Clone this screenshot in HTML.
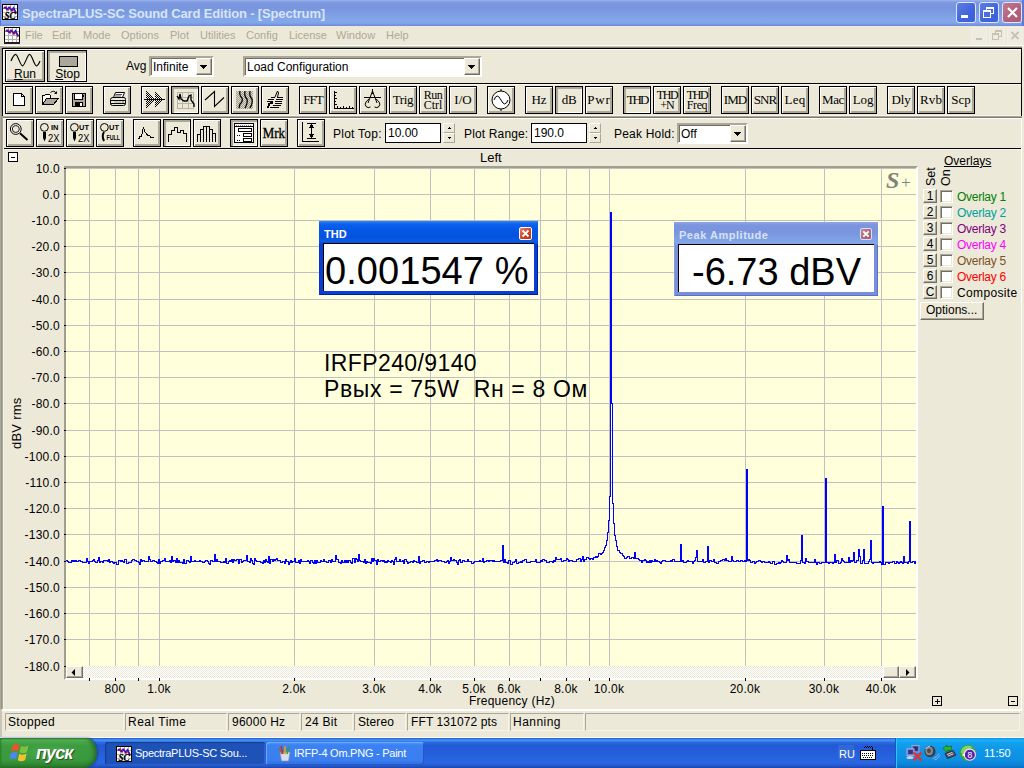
<!DOCTYPE html>
<html><head><meta charset="utf-8"><title>SpectraPLUS-SC Sound Card Edition - [Spectrum]</title>
<style>
html,body{margin:0;padding:0;}
body{width:1024px;height:768px;overflow:hidden;background:#ece9d8;position:relative;
 font-family:"Liberation Sans",sans-serif;font-size:12px;color:#000;}
.a{position:absolute;}
*{box-sizing:border-box;}
.t{position:absolute;white-space:nowrap;line-height:1;}
/* title */
#title{left:0;top:0;width:1024px;height:26px;
 background:linear-gradient(#a3b8ec 0px,#8ba4e6 1px,#7b97e0 3px,#7996df 9px,#7e9fe4 15px,#83a9e9 21px,#80a5e8 23px,#7592e1 25px,#6e8be0 26px);}
#title .tx{left:22px;top:7px;font:bold 13px "Liberation Sans",sans-serif;color:#d8e4f8;}
.tb{position:absolute;top:2px;width:20px;height:21px;border:1px solid #dfe6f8;border-radius:3px;}
/* menu */
.mi{position:absolute;top:29px;font:11px "Liberation Sans",sans-serif;color:#aca899;white-space:nowrap;line-height:13px;}
/* classic buttons */
.b{position:absolute;width:28px;height:28px;border:1px solid #000;background:#ece9d8;
 box-shadow:inset 1px 1px 0 #fff,inset -1px -1px 0 #aca899,inset -2px -2px 0 #aca899;
 font:13px "Liberation Serif",serif;text-align:center;line-height:25px;white-space:nowrap;overflow:hidden;}
.b.p{box-shadow:inset 1px 1px 0 #aca899,inset 2px 2px 0 #aca899,inset -1px -1px 0 #fff;background:#ece9d8;}
.b svg{position:absolute;left:0;top:0;}
.b2{line-height:10px;padding-top:3px;font-size:12px;}
/* xp style sunken field */
.edit{position:absolute;background:#fff;border:1px solid #000;font:12px "Liberation Sans",sans-serif;line-height:18px;padding-left:3px;}
.combo{position:absolute;background:#fff;border:2px solid;border-color:#aca899 #fff #fff #aca899;box-shadow:inset 1px 1px 0 #716f64;
 font:12px "Liberation Sans",sans-serif;line-height:19px;padding-left:2px;}
.dd{position:absolute;background:#ece9d8;border:1px solid;border-color:#fff #716f64 #716f64 #fff;box-shadow:inset -1px -1px 0 #aca899;}
.dd svg{position:absolute;left:3px;top:6px;}
.sp{position:absolute;width:12px;height:10px;background:#ece9d8;border:1px solid;border-color:#fff #aca899 #aca899 #fff;}
.lab{position:absolute;font:12px "Liberation Sans",sans-serif;line-height:15px;white-space:nowrap;}
.ax{position:absolute;font:12px "Liberation Sans",sans-serif;line-height:13px;white-space:nowrap;letter-spacing:0.25px;}
.sb{position:absolute;top:713px;height:18px;border:1px solid;border-color:#aca899 #f4f3ec #f4f3ec #aca899;font:12px "Liberation Sans",sans-serif;line-height:16px;padding-left:3px;white-space:nowrap;}
.ov{position:absolute;font:12px "Liberation Sans",sans-serif;line-height:14px;white-space:nowrap;}
.ob{position:absolute;left:923px;width:14px;height:14px;background:#ece9d8;border:1px solid;border-color:#fff #716f64 #716f64 #fff;box-shadow:inset -1px -1px 0 #aca899;font:12px "Liberation Sans",sans-serif;line-height:12px;text-align:center;}
.cb{position:absolute;left:940px;width:13px;height:13px;background:#fff;border:1px solid;border-color:#aca899 #fff #fff #aca899;box-shadow:inset 1px 1px 0 #716f64,inset -1px -1px 0 #ece9d8;}
.pm{position:absolute;width:10px;height:10px;border:1px solid #000;background:#fff;}
.pm i{position:absolute;background:#000;}
/* floating readouts */
.fw{position:absolute;}
.fw .ti{position:absolute;left:0;top:0;right:0;height:23px;}
.fw .tt{position:absolute;left:5px;top:6px;font:bold 11px "Liberation Sans",sans-serif;line-height:12px;white-space:nowrap;}
.fw .val{position:absolute;left:4px;top:22px;right:4px;bottom:4px;background:#fff;border-top:1px solid #000;border-left:1px solid #000;
 font:38px "Liberation Sans",sans-serif;line-height:54px;white-space:nowrap;}
.fw .x{position:absolute;width:13px;height:13px;border:1px solid #fff;border-radius:2px;}
/* taskbar */
#task{left:0;top:738px;width:1024px;height:30px;
 background:linear-gradient(#1f4fc0 0,#3a80ea 1px,#4091ec 2.5px,#2b6be0 4.5px,#2459d6 7px,#245bd8 12px,#2763de 20px,#2966e2 25px,#2357cc 28px,#1b44ae 30px);}
.tk{position:absolute;top:742px;height:23px;border-radius:3px;font:11px "Liberation Sans",sans-serif;color:#fff;line-height:22px;white-space:nowrap;}
</style></head>
<body>
<div id="title" class="a"><svg class="a" style="left:2px;top:4px" width="16" height="16" viewBox="0 0 16 16" shape-rendering="crispEdges"><rect x="0" y="0" width="16" height="16" fill="#fff"/><rect x="0.5" y="0.5" width="15" height="15" fill="none" stroke="#000"/><rect x="4" y="1" width="1" height="14" fill="#b0b0b0"/><rect x="1" y="4" width="14" height="1" fill="#b0b0b0"/><rect x="8" y="1" width="1" height="14" fill="#b0b0b0"/><rect x="1" y="8" width="14" height="1" fill="#b0b0b0"/><rect x="12" y="1" width="1" height="14" fill="#b0b0b0"/><rect x="1" y="12" width="14" height="1" fill="#b0b0b0"/><path d="M1.5,4.5 L4,3 L6,6 L8,3.5 L10,7 L12,5 L14,10" fill="none" stroke="#e00020" stroke-width="1.4" shape-rendering="auto"/><path d="M2,3 L5,5.5 L7,3 L9.5,6.5 L11.5,3.5 L14.5,9" fill="none" stroke="#1020e0" stroke-width="1.2" shape-rendering="auto"/><rect x="3" y="8" width="10" height="7" fill="#fff" opacity=".6"/><text x="2.500" y="14.600" font-family="Liberation Serif,serif" font-style="italic" font-weight="bold" font-size="9.500" fill="#000" stroke="#000" stroke-width="0.300" shape-rendering="auto" textLength="11" lengthAdjust="spacingAndGlyphs">SC</text></svg><span class="t tx" style="font:bold 13px 'Liberation Sans',sans-serif;letter-spacing:-0.149px;line-height:1">SpectraPLUS-SC Sound Card Edition - [Spectrum]</span><div class="tb" style="left:956px;background:linear-gradient(135deg,#5d7fe6,#3f63dc 60%,#3d62dd)"><i class="a" style="left:4px;top:12px;width:7px;height:3px;background:#fff"></i></div><div class="tb" style="left:979px;background:linear-gradient(135deg,#5d7fe6,#3f63dc 60%,#3d62dd)"><i class="a" style="left:6px;top:4px;width:8px;height:7px;border:1px solid #fff;border-top-width:2px"></i><i class="a" style="left:3px;top:7px;width:8px;height:8px;border:1px solid #fff;border-top-width:2px;background:#4a6ee0"></i></div><div class="tb" style="left:1002px;background:linear-gradient(135deg,#c07a92,#b2607a 60%,#ae5b75)"><svg class="a" style="left:0;top:0" width="19" height="19"><path d="M5,5 L14,14 M14,5 L5,14" stroke="#fff" stroke-width="2.2"/></svg></div><i class="a" style="left:1022px;top:0;width:2px;height:26px;background:#5f78d4"></i><i class="a" style="left:0;top:0;width:1px;height:26px;background:#5f78d4"></i></div>
<svg class="a" style="left:4px;top:27px" width="16" height="16" viewBox="0 0 16 16" shape-rendering="crispEdges"><rect x="0" y="0" width="16" height="16" fill="#fff"/><rect x="0.5" y="0.5" width="15" height="15" fill="none" stroke="#000"/><rect x="4" y="1" width="1" height="14" fill="#b0b0b0"/><rect x="1" y="4" width="14" height="1" fill="#b0b0b0"/><rect x="8" y="1" width="1" height="14" fill="#b0b0b0"/><rect x="1" y="8" width="14" height="1" fill="#b0b0b0"/><rect x="12" y="1" width="1" height="14" fill="#b0b0b0"/><rect x="1" y="12" width="14" height="1" fill="#b0b0b0"/><path d="M1.5,4.5 L4,3 L6,6 L8,3.5 L10,7 L12,5 L14,10" fill="none" stroke="#e00020" stroke-width="1.4" shape-rendering="auto"/><path d="M2,3 L5,5.5 L7,3 L9.5,6.5 L11.5,3.5 L14.5,9" fill="none" stroke="#1020e0" stroke-width="1.2" shape-rendering="auto"/></svg><i class="a" style="left:4px;top:42px;width:16px;height:2px;background:#222"></i><span class="mi" style="left:25px">File</span><span class="mi" style="left:52px">Edit</span><span class="mi" style="left:83px">Mode</span><span class="mi" style="left:121px">Options</span><span class="mi" style="left:170px">Plot</span><span class="mi" style="left:200px">Utilities</span><span class="mi" style="left:246px">Config</span><span class="mi" style="left:289px">License</span><span class="mi" style="left:336px">Window</span><span class="mi" style="left:386px">Help</span><div class="a" style="left:971px;top:27px;width:16px;height:17px;background:#eeece0;border:1px solid #f2f0e6"><i class="a" style="left:4px;top:10px;width:6px;height:2px;background:#c5c2b2"></i></div><div class="a" style="left:989px;top:27px;width:16px;height:17px;background:#eeece0;border:1px solid #f2f0e6"><i class="a" style="left:5px;top:2px;width:7px;height:7px;border:1px solid #c5c2b2;border-top-width:2px"></i><i class="a" style="left:2px;top:5px;width:7px;height:7px;border:1px solid #c5c2b2;border-top-width:2px;background:#eeece0"></i></div><div class="a" style="left:1007px;top:27px;width:16px;height:17px;background:#eeece0;border:1px solid #f2f0e6"><svg class="a" style="left:0;top:0" width="14" height="15"><path d="M3.5,4 L10.5,11 M10.5,4 L3.5,11" stroke="#c5c2b2" stroke-width="1.8"/></svg></div>
<i class="a" style="left:0px;top:45px;width:1024px;height:1px;background:#fff"></i><i class="a" style="left:0px;top:46px;width:1024px;height:1px;background:#c8c5b2"></i><i class="a" style="left:0px;top:47px;width:1024px;height:1px;background:#85837a"></i><i class="a" style="left:0px;top:46px;width:3px;height:663px;background:#aca899"></i><i class="a" style="left:1px;top:48px;width:1px;height:661px;background:#98968a"></i><i class="a" style="left:0px;top:709px;width:2px;height:28px;background:#c8c5b4"></i><i class="a" style="left:2px;top:48px;width:1020px;height:1px;background:#000"></i><i class="a" style="left:2px;top:48px;width:1px;height:68px;background:#000"></i><i class="a" style="left:1021px;top:48px;width:1px;height:68px;background:#000"></i><i class="a" style="left:2px;top:83px;width:1020px;height:1px;background:#000"></i><i class="a" style="left:3px;top:49px;width:1018px;height:1px;background:#fbf9f0"></i><i class="a" style="left:3px;top:49px;width:1px;height:34px;background:#fbf9f0"></i><i class="a" style="left:3px;top:84px;width:1018px;height:1px;background:#fbf9f0"></i><i class="a" style="left:3px;top:84px;width:1px;height:32px;background:#fbf9f0"></i><i class="a" style="left:3px;top:115px;width:1018px;height:1px;background:#f6f3e6"></i><i class="a" style="left:3px;top:116px;width:1019px;height:1px;background:#aca899"></i><i class="a" style="left:3px;top:117px;width:1019px;height:1px;background:#7d7b70"></i><i class="a" style="left:3px;top:118px;width:1px;height:591px;background:#f6f3e6"></i><i class="a" style="left:4px;top:118px;width:1017px;height:1px;background:#fff"></i><i class="a" style="left:4px;top:148px;width:1017px;height:1px;background:#000"></i><i class="a" style="left:4px;top:149px;width:1017px;height:1px;background:#f8f6ee"></i><i class="a" style="left:1021px;top:118px;width:1px;height:593px;background:#fff"></i><i class="a" style="left:1022px;top:46px;width:2px;height:692px;background:#ece9d8"></i><i class="a" style="left:0px;top:737px;width:1024px;height:1px;background:#fff"></i>
<div class="b" style="left:5px;top:50px;width:40px;height:32px;font:12px 'Liberation Sans',sans-serif;line-height:12px;padding-top:17px"><svg width="38" height="30" viewBox="0 0 38 30"><path d="M5,10 C6.500,6.500 8.300,3.400 9.600,3.400 C11.800,3.400 14.300,14.800 16.500,14.800 C18.800,14.800 21.300,3.400 23.600,3.400 C25.900,3.400 28.300,14.800 30.500,14.800 C31.800,14.800 33,12.500 34,10" fill="none" stroke="#000" stroke-width="1.15"/></svg><span style="position:relative"><u>R</u>un</span></div>
<div class="b p" style="left:47px;top:50px;width:40px;height:32px;font:12px 'Liberation Sans',sans-serif;line-height:12px;padding-top:17px;padding-left:1px"><i class="a" style="left:11px;top:5px;width:19px;height:11px;border:1px solid #000;background:#aca899"></i><span style="position:relative"><u>S</u>top</span></div>
<span class="lab" style="left:126px;top:59px">Avg</span>
<div class="combo" style="left:149px;top:56px;width:65px;height:21px">Infinite<i class="dd" style="right:0;top:0;width:16px;height:17px"><svg width="7" height="4" shape-rendering="crispEdges"><path d="M0,0h7v1h-1v1h-1v1h-1v1h-1v-1h-1v-1h-1v-1h-1z" fill="#000"/></svg></i></div>
<div class="combo" style="left:243px;top:56px;width:239px;height:21px">Load Configuration<i class="dd" style="right:0;top:0;width:16px;height:17px"><svg width="7" height="4" shape-rendering="crispEdges"><path d="M0,0h7v1h-1v1h-1v1h-1v1h-1v-1h-1v-1h-1v-1h-1z" fill="#000"/></svg></i></div>
<div class="b" style="left:5px;top:86px"><svg width="26" height="26" viewBox="0 0 26 26" shape-rendering="crispEdges" fill="none" stroke="#000" stroke-width="1"><path d="M7.5,6.5 H15.5 L18.5,9.5 V18.5 H7.5z" fill="#fff"/><path d="M15.5,6.5 V9.5 H18.5"/></svg></div>
<div class="b" style="left:35px;top:86px"><svg width="26" height="26" viewBox="0 0 26 26" shape-rendering="crispEdges" fill="none" stroke="#000" stroke-width="1"><path d="M6.5,17.5 V8.5 H8.5 L9.5,7.5 H13.5 L14.5,8.5 V10.5" fill="#fff"/><path d="M6.5,17.5 L10.5,11.5 H22.5 L17.5,17.5z" fill="#aca899"/><path d="M14.5,5.5 Q18,2.5 20.5,6.5 M20.5,6.5 L18.5,6.5 M20.5,6.5 L20.5,4.5" shape-rendering="auto"/></svg></div>
<div class="b" style="left:65px;top:86px"><svg width="26" height="26" viewBox="0 0 26 26" shape-rendering="crispEdges" fill="none" stroke="#000" stroke-width="1"><rect x="6.5" y="6.5" width="13" height="13" fill="#aca899"/><rect x="8.5" y="6.5" width="8" height="6" fill="#fff"/><rect x="9" y="15" width="8" height="5" fill="#000" stroke="none"/><rect x="14" y="16" width="2" height="3" fill="#fff" stroke="none"/><rect x="17" y="8" width="1" height="2" fill="#000" stroke="none"/></svg></div>
<div class="b" style="left:103px;top:86px"><svg width="26" height="26" viewBox="0 0 26 26" fill="none" stroke="#000" stroke-width="1"><path d="M9.5,10.5 L11.5,5.5 H20.5 L18.5,10.5z" fill="#fff"/><path d="M11.5,7.5 H18 M11,9 H17" stroke="#555"/><path d="M6.500,12.5 Q6.5,10.5 9,10.5 H20 Q21.5,10.500 21.500,12.500 V16.500 Q21.500,18.500 19.500,18.500 H8.500 Q6.500,18.500 6.500,16.500z" fill="#ece9d8"/><path d="M6.500,13.500 H21.500 M6.500,16.500 H21.500"/><path d="M10,15 H17" stroke="#aca899"/><path d="M18,15 H20" stroke="#666"/></svg></div>
<div class="b" style="left:141px;top:86px"><svg width="26" height="26" viewBox="0 0 26 26" shape-rendering="crispEdges"><path d="M4,4h1v1h-1zM4,6h1v1h-1zM4,8h1v1h-1zM4,10h1v1h-1zM4,12h1v1h-1zM4,14h1v1h-1zM4,16h1v1h-1zM4,18h1v1h-1zM4,20h1v1h-1zM5,5h1v1h-1zM5,7h1v1h-1zM5,9h1v1h-1zM5,11h1v1h-1zM5,13h1v1h-1zM5,15h1v1h-1zM5,17h1v1h-1zM5,19h1v1h-1zM6,6h1v1h-1zM6,8h1v1h-1zM6,10h1v1h-1zM6,12h1v1h-1zM6,14h1v1h-1zM6,16h1v1h-1zM6,18h1v1h-1zM7,7h1v1h-1zM7,9h1v1h-1zM7,11h1v1h-1zM7,13h1v1h-1zM7,15h1v1h-1zM7,17h1v1h-1zM8,8h1v1h-1zM8,10h1v1h-1zM8,12h1v1h-1zM8,14h1v1h-1zM8,16h1v1h-1zM9,9h1v1h-1zM9,11h1v1h-1zM9,13h1v1h-1zM9,15h1v1h-1zM10,10h1v1h-1zM10,12h1v1h-1zM10,14h1v1h-1zM11,11h1v1h-1zM11,13h1v1h-1zM12,12h1v1h-1zM13,5h1v1h-1zM13,7h1v1h-1zM13,9h1v1h-1zM13,11h1v1h-1zM13,13h1v1h-1zM13,15h1v1h-1zM13,17h1v1h-1zM13,19h1v1h-1zM14,6h1v1h-1zM14,8h1v1h-1zM14,10h1v1h-1zM14,12h1v1h-1zM14,14h1v1h-1zM14,16h1v1h-1zM14,18h1v1h-1zM15,7h1v1h-1zM15,9h1v1h-1zM15,11h1v1h-1zM15,13h1v1h-1zM15,15h1v1h-1zM15,17h1v1h-1zM16,8h1v1h-1zM16,10h1v1h-1zM16,12h1v1h-1zM16,14h1v1h-1zM16,16h1v1h-1zM17,9h1v1h-1zM17,11h1v1h-1zM17,13h1v1h-1zM17,15h1v1h-1zM18,10h1v1h-1zM18,12h1v1h-1zM18,14h1v1h-1zM19,11h1v1h-1zM19,13h1v1h-1zM20,12h1v1h-1z" fill="#000"/><path d="M2,12.500 H23" stroke="#000"/></svg></div>
<div class="b p" style="left:171px;top:86px"><svg width="26" height="26" viewBox="0 0 26 26" shape-rendering="crispEdges" fill="none" stroke="#000" stroke-width="1"><path d="M5.5,5.5 H21.5 V21.500 H5.5z M5.5,10.5 H21.5 M5.5,16.5 H21.5 M10.5,5.5 V21.5 M16.5,5.5 V21.5" stroke="#b8b4a0" stroke-width="1"/><path d="M5,9 L7,12 L8,7 L9,12 L12,14 L15,14 L17,9 L19,8 L19,13 L22,17 L22,20" stroke-width="1.35" shape-rendering="auto"/></svg></div>
<div class="b" style="left:201px;top:86px"><svg width="26" height="26" viewBox="0 0 26 26" shape-rendering="crispEdges" fill="none" stroke="#000" stroke-width="1"><path d="M3,13 L12.500,4.500 V19.500 L22,10.500" shape-rendering="auto" stroke-width="1.1"/></svg></div>
<div class="b" style="left:231px;top:86px"><svg width="26" height="26" viewBox="0 0 26 26"><defs><pattern id="hw" width="2" height="2" patternUnits="userSpaceOnUse"><rect width="2" height="2" fill="#dcd8ca"/><rect x="0" y="0" width="1" height="1" fill="#a09c8e"/><rect x="1" y="1" width="1" height="1" fill="#a09c8e"/></pattern></defs><rect x="4" y="4" width="17" height="18" fill="url(#hw)"/><path d="M8,4 Q7,8 10,11 Q11,15 8,17 L7,21 M13,4 Q12,9 15,12 Q16,16 13,21 M18,4 Q17,9 20,12 Q21,16 18,21" fill="none" stroke="#000" stroke-width="1.25"/></svg></div>
<div class="b" style="left:261px;top:86px"><svg width="26" height="26" viewBox="0 0 26 26" shape-rendering="crispEdges" fill="none" stroke="#000" stroke-width="1"><path d="M9,10.500 H13 M15,10.500 H21 M6,12.500 H12 M14,12.500 H21 M5,14.500 H11 M13,14.500 H20 M6,16.500 H9 M13,16.500 H20 M6,18.500 H8 M11,18.500 H19 M8,20.500 H17" stroke-width="1"/><path d="M13,10 L15.500,4 L16.500,6 L15.500,10" shape-rendering="auto"/><path d="M9,14 L11,14 L11,17 L8,17 L7,21 L5,21 L6,17z" fill="#000" stroke="none"/></svg></div>
<div class="b" style="left:299px;top:86px"><span style="font:13px 'Liberation Serif',serif;letter-spacing:-0.969px;line-height:inherit">FFT</span></div>
<div class="b" style="left:329px;top:86px"><svg width="26" height="26" viewBox="0 0 26 26" shape-rendering="crispEdges" fill="none" stroke="#000" stroke-width="1"><path d="M4.500,4 V21.500 H24 M4.500,5.500 H7 M4.500,8.500 H6 M4.500,11.500 H7 M4.500,14.500 H6 M4.500,17.500 H7 M7.500,21.500 V19 M10.500,21.500 V20 M13.500,21.500 V19 M16.500,21.500 V20 M19.500,21.500 V19 M22.500,21.500 V20"/></svg></div>
<div class="b" style="left:359px;top:86px"><svg width="26" height="26" viewBox="0 0 26 26" fill="none" stroke="#000" stroke-width="1"><path d="M12.500,2 V7 M12.500,4 L8,16 M12.500,4 L17,16 M4,10.500 H21"/><path d="M9,12 Q3.500,16 6,19.500 Q8,21.500 10.500,20 M16,12 Q21.500,16 19,19.500 Q17,21.500 14.500,20"/></svg></div>
<div class="b" style="left:389px;top:86px"><span style="font:13px 'Liberation Serif',serif;letter-spacing:-0.359px;line-height:inherit">Trig</span></div>
<div class="b b2" style="left:419px;top:86px"><span style="font:12px 'Liberation Serif',serif;letter-spacing:-0.505px;line-height:inherit">Run</span><br><span style="font:12px 'Liberation Serif',serif;letter-spacing:-0.043px;line-height:inherit">Ctrl</span></div>
<div class="b" style="left:449px;top:86px"><span style="font:13px 'Liberation Serif',serif;letter-spacing:0.052px;line-height:inherit">I/O</span></div>
<div class="b" style="left:487px;top:86px"><svg width="26" height="26" viewBox="0 0 26 26" fill="none" stroke="#000" stroke-width="1"><circle cx="13" cy="13" r="9" fill="#fff"/><path d="M13,2 V4 M13,22 V24"/><path d="M6,13 Q9,5 13,13 Q17,21 20,13"/></svg></div>
<div class="b" style="left:525px;top:86px"><span style="font:13px 'Liberation Serif',serif;letter-spacing:-0.086px;line-height:inherit">Hz</span></div>
<div class="b p" style="left:555px;top:86px"><span style="font:13px 'Liberation Serif',serif;letter-spacing:-0.336px;line-height:inherit">dB</span></div>
<div class="b" style="left:585px;top:86px"><span style="font:13px 'Liberation Serif',serif;letter-spacing:0.849px;line-height:inherit">Pwr</span></div>
<div class="b p" style="left:623px;top:86px"><span style="font:13px 'Liberation Serif',serif;letter-spacing:-2.073px;line-height:inherit">THD</span></div>
<div class="b b2" style="left:653px;top:86px"><span style="font:12px 'Liberation Serif',serif;letter-spacing:-1.391px;line-height:inherit">THD</span><br><span style="font:12px 'Liberation Serif',serif;letter-spacing:-0.969px;line-height:inherit">+N</span></div>
<div class="b b2" style="left:683px;top:86px"><span style="font:12px 'Liberation Serif',serif;letter-spacing:-1.391px;line-height:inherit">THD</span><br><span style="font:12px 'Liberation Serif',serif;letter-spacing:-0.375px;line-height:inherit">Freq</span></div>
<div class="b" style="left:721px;top:86px"><span style="font:13px 'Liberation Serif',serif;letter-spacing:-0.927px;line-height:inherit">IMD</span></div>
<div class="b" style="left:751px;top:86px"><span style="font:13px 'Liberation Serif',serif;letter-spacing:-0.932px;line-height:inherit">SNR</span></div>
<div class="b" style="left:781px;top:86px"><span style="font:13px 'Liberation Serif',serif;letter-spacing:0.260px;line-height:inherit">Leq</span></div>
<div class="b" style="left:819px;top:86px"><span style="font:13px 'Liberation Serif',serif;letter-spacing:-0.370px;line-height:inherit">Mac</span></div>
<div class="b" style="left:849px;top:86px"><span style="font:13px 'Liberation Serif',serif;letter-spacing:-0.151px;line-height:inherit">Log</span></div>
<div class="b" style="left:887px;top:86px"><span style="font:13px 'Liberation Serif',serif;letter-spacing:-0.167px;line-height:inherit">Dly</span></div>
<div class="b" style="left:917px;top:86px"><span style="font:13px 'Liberation Serif',serif;letter-spacing:0.109px;line-height:inherit">Rvb</span></div>
<div class="b" style="left:947px;top:86px"><span style="font:13px 'Liberation Serif',serif;letter-spacing:0.000px;line-height:inherit">Scp</span></div>
<div class="b" style="left:6px;top:119px"><svg width="26" height="26" viewBox="0 0 26 26" fill="none" stroke="#000" stroke-width="1"><circle cx="8.800" cy="9" r="5.400" fill="#fff"/><circle cx="8.800" cy="9" r="3.500" fill="#ece9d8" stroke-width="0.9"/><path d="M13,13.200 L20.500,20" stroke-width="2"/></svg></div>
<div class="b" style="left:36px;top:119px"><svg width="26" height="26" viewBox="0 0 26 26"><circle cx="7.400" cy="7.400" r="3.900" fill="#ece9d8" stroke="#000"/><path d="M6,12 H9 V18 L7.500,21.500 L6,18z" fill="#000"/><text x="14" y="10" font-family="Liberation Sans,sans-serif" font-size="6.500" font-weight="bold" fill="#000" textLength="7.5" lengthAdjust="spacingAndGlyphs">IN</text><text x="11" y="21.500" font-family="Liberation Sans,sans-serif" font-size="11.500" fill="#000" textLength="11.500" lengthAdjust="spacingAndGlyphs">2X</text></svg></div>
<div class="b" style="left:66px;top:119px"><svg width="26" height="26" viewBox="0 0 26 26"><circle cx="7.400" cy="7.400" r="3.900" fill="#ece9d8" stroke="#000"/><path d="M6,12 H9 V18 L7.500,21.500 L6,18z" fill="#000"/><text x="12" y="10" font-family="Liberation Sans,sans-serif" font-size="6.500" font-weight="bold" fill="#000" textLength="10" lengthAdjust="spacingAndGlyphs">UT</text><text x="11" y="21.500" font-family="Liberation Sans,sans-serif" font-size="11.500" fill="#000" textLength="11.500" lengthAdjust="spacingAndGlyphs">2X</text></svg></div>
<div class="b" style="left:96px;top:119px"><svg width="26" height="26" viewBox="0 0 26 26"><circle cx="7.400" cy="7.400" r="3.900" fill="#ece9d8" stroke="#000"/><path d="M7,12 Q4.500,16 7,21" stroke="#000" stroke-width="2" fill="none"/><text x="12" y="10" font-family="Liberation Sans,sans-serif" font-size="6.500" font-weight="bold" fill="#000" textLength="10" lengthAdjust="spacingAndGlyphs">UT</text><text x="9.500" y="19.500" font-family="Liberation Sans,sans-serif" font-size="6.500" font-weight="bold" fill="#000" textLength="13.500" lengthAdjust="spacingAndGlyphs">FULL</text></svg></div>
<div class="b" style="left:133px;top:119px"><svg width="26" height="26" viewBox="0 0 26 26" shape-rendering="crispEdges" fill="none" stroke="#000" stroke-width="1"><path d="M3.500,18.500 H5.500 V16.500 H7.500 L9.500,7 L10.500,11.500 L12.500,13.500 L13.500,15.500 H15.500 L17,17.500 H19 L20.500,18.500" stroke-width="1"/></svg></div>
<div class="b p" style="left:163px;top:119px"><svg width="26" height="26" viewBox="0 0 26 26" shape-rendering="crispEdges" fill="none" stroke="#000" stroke-width="1"><path d="M4.500,22 V14.500 H7.500 V10.500 H10.500 V7.500 H13.500 V12.500 H16.500 V10.500 H19.500 V13.500 H22.500 V22" stroke-width="1"/></svg></div>
<div class="b" style="left:193px;top:119px"><svg width="26" height="26" viewBox="0 0 26 26" shape-rendering="crispEdges" fill="none" stroke="#000" stroke-width="1"><path d="M3.500,22 V14.500 H6.500 V22 M6.500,14.500 V9.500 H9.500 V22 M9.500,9.500 V6.500 H12.500 V22 M12.500,6.500 H15.500 V22 M15.500,9.500 H18.500 V22 M18.500,13.500 H21.500 V22"/></svg></div>
<div class="b p" style="left:230px;top:119px"><svg width="26" height="26" viewBox="0 0 26 26" shape-rendering="crispEdges" fill="none" stroke="#000" stroke-width="1"><rect x="3.500" y="3.500" width="19" height="19" fill="#fff"/><path d="M3.500,6.500 H22.500"/><path d="M5,5 H21" stroke="#888" stroke-dasharray="1 1"/><rect x="7.500" y="8.500" width="13" height="3" fill="#fff"/><rect x="12.500" y="13.500" width="8" height="3" fill="#fff"/><rect x="12.500" y="18.500" width="8" height="3" fill="#fff"/><path d="M6,15 H10 M6,20 H10" stroke-dasharray="1 1"/></svg></div>
<div class="b" style="left:260px;top:119px"><span style="display:inline-block;transform:scaleX(.86);font:15px 'Liberation Serif',serif;line-height:26px;-webkit-text-stroke:0.35px #000">Mrk</span></div>
<div class="b" style="left:297px;top:119px"><svg width="26" height="26" viewBox="0 0 26 26" shape-rendering="crispEdges" fill="none" stroke="#000" stroke-width="1"><path d="M4.500,2 V21.500 H21"/><path d="M9,3.500 H18 M9,18.500 H18 M13.500,4 V18"/><path d="M13.500,4 L10.500,8 H16.500z M13.500,18 L10.500,14 H16.500z" fill="#000" stroke="none"/></svg></div>
<span class="lab" style="left:333px;top:127px;letter-spacing:0.25px">Plot Top:</span>
<div class="edit" style="left:385px;top:123px;width:56px;height:20px;padding-left:2px">10.00</div>
<i class="sp" style="left:443px;top:123px"><svg class="a" style="left:3px;top:3px" width="5" height="3" shape-rendering="crispEdges"><path d="M2,0h1v1h1v1h-3v-1h1z" fill="#000"/></svg></i>
<i class="sp" style="left:443px;top:133px"><svg class="a" style="left:3px;top:3px" width="5" height="3" shape-rendering="crispEdges"><path d="M1,0h3v1h-1v1h-1v-1h-1z" fill="#000"/></svg></i>
<span class="lab" style="left:464px;top:127px;letter-spacing:0.15px">Plot Range:</span>
<div class="edit" style="left:531px;top:123px;width:56px;height:20px;padding-left:2px">190.0</div>
<i class="sp" style="left:589px;top:123px"><svg class="a" style="left:3px;top:3px" width="5" height="3" shape-rendering="crispEdges"><path d="M2,0h1v1h1v1h-3v-1h1z" fill="#000"/></svg></i>
<i class="sp" style="left:589px;top:133px"><svg class="a" style="left:3px;top:3px" width="5" height="3" shape-rendering="crispEdges"><path d="M1,0h3v1h-1v1h-1v-1h-1z" fill="#000"/></svg></i>
<span class="lab" style="left:614px;top:127px;letter-spacing:0.2px">Peak Hold:</span>
<div class="combo" style="left:677px;top:123px;width:71px;height:21px">Off<i class="dd" style="right:0;top:0;width:16px;height:17px"><svg width="7" height="4" shape-rendering="crispEdges"><path d="M0,0h7v1h-1v1h-1v1h-1v1h-1v-1h-1v-1h-1v-1h-1z" fill="#000"/></svg></i></div>

<div class="pm" style="left:8px;top:152px"><i style="left:2px;top:4px;width:4px;height:1px"></i></div>
<span class="lab" style="left:480px;top:150px;font-size:13px">Left</span>
<div class="a" style="left:64px;top:166px;width:854px;height:514px;border:2px solid;border-color:#a0a090 #fff #fff #a0a090;background:#ffffdc"></div>
<svg class="a" style="left:66px;top:168px" width="850" height="510" viewBox="66 168 850 510" shape-rendering="crispEdges"><path d="M89.5,168V666M115.5,168V666M138.5,168V666M159.5,168V666M294.5,168V666M374.5,168V666M430.5,168V666M474.5,168V666M509.5,168V666M540.5,168V666M566.5,168V666M589.5,168V666M609.5,168V666M745.5,168V666M824.5,168V666M881.5,168V666M66,168.5H916M66,194.5H916M66,220.5H916M66,246.5H916M66,272.5H916M66,299.5H916M66,325.5H916M66,351.5H916M66,377.5H916M66,403.5H916M66,430.5H916M66,456.5H916M66,482.5H916M66,508.5H916M66,534.5H916M66,561.5H916M66,587.5H916M66,613.5H916M66,639.5H916" stroke="#c0c0c0" stroke-width="1" fill="none"/><path d="M66.5,560.5H67.5V561.5H68.5V562.5H69.5H70.5H71.5V560.5H72.5V561.5H73.5V560.5H74.5V561.5H75.5V560.5H76.5V561.5H77.5H78.5V560.5H79.5H80.5V561.5H81.5H82.5V562.5H83.5H84.5H85.5H86.5V558.5H87.5V561.5H88.5V563.5H89.5V561.5H90.5H91.5H92.5V560.5H93.5V559.5H94.5V561.5H95.5V562.5H96.5H97.5V560.5H98.5V557.5H99.5V562.5H100.5V561.5H101.5H102.5V562.5H103.5V560.5H104.5H105.5H106.5H107.5V561.5H108.5V559.5H109.5V562.5H110.5V561.5H111.5H112.5V562.5H113.5V563.5H114.5V562.5H115.5H116.5V564.5H117.5H118.5V560.5H119.5H120.5V561.5H121.5V560.5H122.5V561.5H123.5V562.5H124.5V559.5H125.5H126.5V563.5H127.5H128.5V562.5H129.5H130.5H131.5V560.5H132.5V559.5H133.5H134.5V560.5H135.5H136.5V561.5H137.5H138.5V562.5H139.5V564.5H140.5V559.5H141.5V561.5H142.5V560.5H143.5H144.5V561.5H145.5H146.5H147.5H148.5V556.5H149.5V559.5H150.5V561.5H151.5H152.5V560.5H153.5H154.5V561.5H155.5H156.5V562.5H157.5V563.5H158.5V559.5H159.5V563.5H160.5V561.5H161.5H162.5V560.5H163.5H164.5V558.5H165.5V561.5H166.5H167.5H168.5H169.5V560.5H170.5V562.5H171.5V556.5H172.5V561.5H173.5V560.5H174.5H175.5V562.5H176.5V558.5H177.5V562.5H178.5V560.5H179.5V562.5H180.5H181.5H182.5V563.5H183.5V559.5H184.5V563.5H185.5H186.5V560.5H187.5H188.5V561.5H189.5V562.5H190.5V556.5H191.5V561.5H192.5H193.5H194.5V560.5H195.5V561.5H196.5H197.5H198.5H199.5V560.5H200.5V561.5H201.5H202.5V562.5H203.5H204.5V561.5H205.5V560.5H206.5H207.5V561.5H208.5V563.5H209.5V564.5H210.5V560.5H211.5H212.5V561.5H213.5H214.5V554.5H215.5V561.5H216.5V559.5H217.5V561.5H218.5H219.5H220.5V562.5H221.5H222.5H223.5V561.5H224.5V562.5H225.5V558.5H226.5V563.5H227.5H228.5V561.5H229.5V560.5H230.5V561.5H231.5V559.5H232.5V562.5H233.5V559.5H234.5V560.5H235.5H236.5V559.5H237.5H238.5V563.5H239.5V559.5H240.5H241.5V562.5H242.5V561.5H243.5V560.5H244.5H245.5H246.5V555.5H247.5V561.5H248.5H249.5V562.5H250.5V558.5H251.5V560.5H252.5V563.5H253.5V564.5H254.5V558.5H255.5V560.5H256.5V561.5H257.5H258.5H259.5H260.5V562.5H261.5H262.5V563.5H263.5V560.5H264.5V562.5H265.5V559.5H266.5V561.5H267.5V562.5H268.5V556.5H269.5V563.5H270.5V559.5H271.5H272.5V561.5H273.5V559.5H274.5V560.5H275.5V559.5H276.5V558.5H277.5V560.5H278.5H279.5H280.5V562.5H281.5H282.5V561.5H283.5H284.5V563.5H285.5V559.5H286.5V561.5H287.5H288.5V564.5H289.5V562.5H290.5V560.5H291.5V562.5H292.5V561.5H293.5H294.5V558.5H295.5V562.5H296.5H297.5H298.5V560.5H299.5V563.5H300.5V559.5H301.5V561.5H302.5H303.5H304.5H305.5H306.5H307.5V560.5H308.5V561.5H309.5V563.5H310.5V560.5H311.5H312.5V562.5H313.5V563.5H314.5V560.5H315.5V563.5H316.5V560.5H317.5V562.5H318.5H319.5H320.5V560.5H321.5V561.5H322.5H323.5V559.5H324.5V561.5H325.5H326.5V562.5H327.5H328.5V560.5H329.5H330.5V562.5H331.5V559.5H332.5V561.5H333.5H334.5H335.5V555.5H336.5V559.5H337.5H338.5V562.5H339.5H340.5V563.5H341.5V560.5H342.5V562.5H343.5H344.5V560.5H345.5V562.5H346.5V560.5H347.5V562.5H348.5V560.5H349.5H350.5V562.5H351.5V563.5H352.5V558.5H353.5H354.5V562.5H355.5V558.5H356.5V559.5H357.5V561.5H358.5V554.5H359.5V560.5H360.5V561.5H361.5H362.5H363.5V562.5H364.5V559.5H365.5V563.5H366.5V561.5H367.5V562.5H368.5H369.5H370.5V563.5H371.5V558.5H372.5V561.5H373.5V558.5H374.5V560.5H375.5H376.5V564.5H377.5V559.5H378.5V561.5H379.5H380.5V560.5H381.5H382.5V561.5H383.5V560.5H384.5V562.5H385.5V561.5H386.5V562.5H387.5V560.5H388.5V561.5H389.5H390.5V562.5H391.5V560.5H392.5V561.5H393.5V564.5H394.5V559.5H395.5V557.5H396.5V561.5H397.5H398.5H399.5V559.5H400.5V561.5H401.5H402.5V560.5H403.5V563.5H404.5V559.5H405.5H406.5V561.5H407.5V563.5H408.5V562.5H409.5H410.5V561.5H411.5H412.5V562.5H413.5V560.5H414.5V561.5H415.5H416.5V562.5H417.5H418.5V556.5H419.5V563.5H420.5V561.5H421.5H422.5V560.5H423.5H424.5V562.5H425.5H426.5V561.5H427.5H428.5V562.5H429.5V561.5H430.5H431.5H432.5H433.5H434.5V560.5H435.5H436.5V559.5H437.5V561.5H438.5V560.5H439.5H440.5H441.5V561.5H442.5H443.5H444.5V562.5H445.5H446.5V561.5H447.5V560.5H448.5V563.5H449.5V561.5H450.5V557.5H451.5V560.5H452.5H453.5V559.5H454.5V560.5H455.5H456.5V562.5H457.5V564.5H458.5V560.5H459.5V559.5H460.5V562.5H461.5H462.5V560.5H463.5H464.5V561.5H465.5H466.5H467.5V559.5H468.5V561.5H469.5H470.5H471.5V563.5H472.5H473.5V562.5H474.5V561.5H475.5H476.5H477.5H478.5H479.5V560.5H480.5V561.5H481.5H482.5V558.5H483.5V562.5H484.5V561.5H485.5H486.5V560.5H487.5H488.5V561.5H489.5V560.5H490.5H491.5H492.5V561.5H493.5V560.5H494.5V561.5H495.5H496.5H497.5H498.5H499.5H500.5V560.5H501.5H502.5V545.5H503.5V562.5H504.5V559.5H505.5V562.5H506.5H507.5V563.5H508.5V560.5H509.5H510.5V564.5H511.5H512.5V562.5H513.5H514.5V561.5H515.5V559.5H516.5V563.5H517.5H518.5V562.5H519.5H520.5V561.5H521.5V562.5H522.5V560.5H523.5H524.5V559.5H525.5H526.5V562.5H527.5H528.5H529.5H530.5V561.5H531.5H532.5H533.5H534.5H535.5V559.5H536.5V562.5H537.5H538.5H539.5H540.5V560.5H541.5V561.5H542.5V559.5H543.5H544.5V560.5H545.5H546.5V562.5H547.5H548.5H549.5V561.5H550.5H551.5H552.5V562.5H553.5V560.5H554.5V561.5H555.5V557.5H556.5V559.5H557.5H558.5H559.5H560.5V558.5H561.5V561.5H562.5H563.5V560.5H564.5H565.5H566.5V558.5H567.5V559.5H568.5V561.5H569.5V560.5H570.5H571.5H572.5V561.5H573.5H574.5H575.5H576.5V559.5H577.5H578.5V558.5H579.5H580.5V561.5H581.5V559.5H582.5V556.5H583.5V561.5H584.5V559.5H585.5H586.5V557.5H587.5H588.5V558.5H589.5V559.5H590.5V558.5H591.5H592.5V559.5H593.5V557.5H594.5H595.5V556.5H596.5V557.5H597.5V556.5H598.5V553.5H599.5H600.5V554.5H601.5V553.5H602.5V552.5H603.5V550.5H604.5V547.5H605.5V545.5H606.5V540.5H607.5V532.5H608.5V520.5H609.5V496.5H610.5V212.5H611.5V403.5H612.5V503.5H613.5V523.5H614.5V535.5H615.5V540.5H616.5V546.5H617.5V550.5H618.5H619.5V552.5H620.5V553.5H621.5H622.5V555.5H623.5V556.5H624.5V558.5H625.5H626.5V557.5H627.5V556.5H628.5H629.5V558.5H630.5H631.5V557.5H632.5H633.5V558.5H634.5V552.5H635.5V558.5H636.5H637.5H638.5V559.5H639.5V560.5H640.5H641.5V562.5H642.5V560.5H643.5H644.5V559.5H645.5V560.5H646.5V562.5H647.5V561.5H648.5V562.5H649.5V560.5H650.5V562.5H651.5V560.5H652.5V561.5H653.5H654.5V559.5H655.5V561.5H656.5V560.5H657.5V561.5H658.5H659.5V562.5H660.5V563.5H661.5V561.5H662.5V560.5H663.5H664.5H665.5V561.5H666.5H667.5H668.5H669.5H670.5V560.5H671.5V561.5H672.5V559.5H673.5H674.5V561.5H675.5H676.5H677.5H678.5H679.5H680.5V544.5H681.5V561.5H682.5V560.5H683.5V562.5H684.5H685.5H686.5V561.5H687.5V560.5H688.5V561.5H689.5H690.5H691.5H692.5V563.5H693.5V561.5H694.5V560.5H695.5V557.5H696.5V550.5H697.5V561.5H698.5H699.5H700.5H701.5H702.5V559.5H703.5V562.5H704.5H705.5V561.5H706.5H707.5V546.5H708.5V562.5H709.5V560.5H710.5H711.5V561.5H712.5H713.5V559.5H714.5V562.5H715.5H716.5V563.5H717.5H718.5V561.5H719.5H720.5V560.5H721.5H722.5V559.5H723.5H724.5V560.5H725.5V558.5H726.5V560.5H727.5H728.5V561.5H729.5H730.5H731.5V556.5H732.5V560.5H733.5V561.5H734.5H735.5H736.5V560.5H737.5H738.5V561.5H739.5H740.5V560.5H741.5H742.5V561.5H743.5H744.5V560.5H745.5V561.5H746.5V469.5H747.5V560.5H748.5V559.5H749.5V560.5H750.5V562.5H751.5H752.5V561.5H753.5H754.5V563.5H755.5V562.5H756.5V561.5H757.5H758.5V560.5H759.5H760.5V561.5H761.5V562.5H762.5V561.5H763.5H764.5V562.5H765.5H766.5H767.5H768.5V561.5H769.5V562.5H770.5V563.5H771.5H772.5V561.5H773.5H774.5V564.5H775.5H776.5V563.5H777.5H778.5V562.5H779.5V563.5H780.5V562.5H781.5V560.5H782.5V561.5H783.5V562.5H784.5H785.5H786.5V555.5H787.5V560.5H788.5V559.5H789.5V562.5H790.5H791.5H792.5H793.5H794.5H795.5H796.5V563.5H797.5H798.5H799.5H800.5V560.5H801.5V535.5H802.5V562.5H803.5H804.5V563.5H805.5V558.5H806.5V561.5H807.5H808.5V562.5H809.5H810.5H811.5H812.5H813.5H814.5V559.5H815.5V562.5H816.5V564.5H817.5V562.5H818.5H819.5V563.5H820.5H821.5V562.5H822.5H823.5H824.5H825.5V478.5H826.5V562.5H827.5H828.5V563.5H829.5V562.5H830.5H831.5H832.5V563.5H833.5V562.5H834.5V554.5H835.5V562.5H836.5V560.5H837.5H838.5V563.5H839.5H840.5V562.5H841.5V558.5H842.5V560.5H843.5V561.5H844.5V562.5H845.5H846.5H847.5H848.5V557.5H849.5V562.5H850.5V560.5H851.5V561.5H852.5V560.5H853.5V552.5H854.5V562.5H855.5H856.5V560.5H857.5H858.5V549.5H859.5V556.5H860.5V563.5H861.5H862.5V560.5H863.5V549.5H864.5V563.5H865.5H866.5H867.5H868.5V561.5H869.5V559.5H870.5V540.5H871.5V562.5H872.5V563.5H873.5V562.5H874.5H875.5H876.5H877.5H878.5H879.5V561.5H880.5V562.5H881.5V564.5H882.5V506.5H883.5V564.5H884.5H885.5V562.5H886.5H887.5H888.5V563.5H889.5V562.5H890.5H891.5H892.5V561.5H893.5H894.5V563.5H895.5H896.5V561.5H897.5V562.5H898.5V563.5H899.5V562.5H900.5V561.5H901.5V562.5H902.5V563.5H903.5V556.5H904.5V562.5H905.5H906.5H907.5V563.5H908.5V561.5H909.5V521.5H910.5V562.5H911.5H912.5V561.5H913.5H914.5V563.5H915.5V561.5" stroke="#0000ff" stroke-width="1" fill="none" stroke-linecap="square" stroke-linejoin="miter"/></svg>
<div class="a" style="left:66px;top:666px;width:850px;height:12px;background:#f6f5ec;background-image:conic-gradient(#fff 25%,#ece9d8 0 50%,#fff 0 75%,#ece9d8 0);background-size:2px 2px"></div>
<div class="a" style="left:66px;top:666px;width:17px;height:12px;background:#ece9d8;border:1px solid;border-color:#fff #716f64 #716f64 #fff;box-shadow:inset -1px -1px 0 #aca899"><svg class="a" style="left:4px;top:2px" width="5" height="7"><path d="M4,0 L0.5,3.5 L4,7z"/></svg></div>
<div class="a" style="left:899px;top:666px;width:17px;height:12px;background:#ece9d8;border:1px solid;border-color:#fff #716f64 #716f64 #fff;box-shadow:inset -1px -1px 0 #aca899"><svg class="a" style="left:6px;top:2px" width="5" height="7"><path d="M0,0 L3.5,3.5 L0,7z"/></svg></div>
<div class="a" style="left:883px;top:666px;width:16px;height:12px;background:#ece9d8;border:1px solid;border-color:#fff #716f64 #716f64 #fff;box-shadow:inset -1px -1px 0 #aca899"></div>
<i class="a" style="left:64px;top:168px;width:2px;height:1px;background:#000"></i>
<span class="ax" style="right:964px;top:163px">10.0</span>
<i class="a" style="left:64px;top:194px;width:2px;height:1px;background:#000"></i>
<span class="ax" style="right:964px;top:189px">0.0</span>
<i class="a" style="left:64px;top:220px;width:2px;height:1px;background:#000"></i>
<span class="ax" style="right:964px;top:215px">-10.0</span>
<i class="a" style="left:64px;top:246px;width:2px;height:1px;background:#000"></i>
<span class="ax" style="right:964px;top:241px">-20.0</span>
<i class="a" style="left:64px;top:272px;width:2px;height:1px;background:#000"></i>
<span class="ax" style="right:964px;top:267px">-30.0</span>
<i class="a" style="left:64px;top:299px;width:2px;height:1px;background:#000"></i>
<span class="ax" style="right:964px;top:294px">-40.0</span>
<i class="a" style="left:64px;top:325px;width:2px;height:1px;background:#000"></i>
<span class="ax" style="right:964px;top:320px">-50.0</span>
<i class="a" style="left:64px;top:351px;width:2px;height:1px;background:#000"></i>
<span class="ax" style="right:964px;top:346px">-60.0</span>
<i class="a" style="left:64px;top:377px;width:2px;height:1px;background:#000"></i>
<span class="ax" style="right:964px;top:372px">-70.0</span>
<i class="a" style="left:64px;top:403px;width:2px;height:1px;background:#000"></i>
<span class="ax" style="right:964px;top:398px">-80.0</span>
<i class="a" style="left:64px;top:430px;width:2px;height:1px;background:#000"></i>
<span class="ax" style="right:964px;top:425px">-90.0</span>
<i class="a" style="left:64px;top:456px;width:2px;height:1px;background:#000"></i>
<span class="ax" style="right:964px;top:451px">-100.0</span>
<i class="a" style="left:64px;top:482px;width:2px;height:1px;background:#000"></i>
<span class="ax" style="right:964px;top:477px">-110.0</span>
<i class="a" style="left:64px;top:508px;width:2px;height:1px;background:#000"></i>
<span class="ax" style="right:964px;top:503px">-120.0</span>
<i class="a" style="left:64px;top:534px;width:2px;height:1px;background:#000"></i>
<span class="ax" style="right:964px;top:529px">-130.0</span>
<i class="a" style="left:64px;top:561px;width:2px;height:1px;background:#000"></i>
<span class="ax" style="right:964px;top:556px">-140.0</span>
<i class="a" style="left:64px;top:587px;width:2px;height:1px;background:#000"></i>
<span class="ax" style="right:964px;top:582px">-150.0</span>
<i class="a" style="left:64px;top:613px;width:2px;height:1px;background:#000"></i>
<span class="ax" style="right:964px;top:608px">-160.0</span>
<i class="a" style="left:64px;top:639px;width:2px;height:1px;background:#000"></i>
<span class="ax" style="right:964px;top:634px">-170.0</span>
<i class="a" style="left:64px;top:666px;width:2px;height:1px;background:#000"></i>
<span class="ax" style="right:964px;top:661px">-180.0</span>
<span class="ax" style="left:10px;top:449px;transform:rotate(-90deg);transform-origin:0 0;font:13px 'Liberation Sans',sans-serif;letter-spacing:0.237px;line-height:14px">dBV rms</span>
<i class="a" style="left:89px;top:678px;width:1px;height:3px;background:#000"></i>
<i class="a" style="left:115px;top:678px;width:1px;height:3px;background:#000"></i>
<i class="a" style="left:138px;top:678px;width:1px;height:3px;background:#000"></i>
<i class="a" style="left:159px;top:678px;width:1px;height:3px;background:#000"></i>
<i class="a" style="left:294px;top:678px;width:1px;height:3px;background:#000"></i>
<i class="a" style="left:374px;top:678px;width:1px;height:3px;background:#000"></i>
<i class="a" style="left:430px;top:678px;width:1px;height:3px;background:#000"></i>
<i class="a" style="left:474px;top:678px;width:1px;height:3px;background:#000"></i>
<i class="a" style="left:509px;top:678px;width:1px;height:3px;background:#000"></i>
<i class="a" style="left:540px;top:678px;width:1px;height:3px;background:#000"></i>
<i class="a" style="left:566px;top:678px;width:1px;height:3px;background:#000"></i>
<i class="a" style="left:589px;top:678px;width:1px;height:3px;background:#000"></i>
<i class="a" style="left:609px;top:678px;width:1px;height:3px;background:#000"></i>
<i class="a" style="left:745px;top:678px;width:1px;height:3px;background:#000"></i>
<i class="a" style="left:824px;top:678px;width:1px;height:3px;background:#000"></i>
<i class="a" style="left:881px;top:678px;width:1px;height:3px;background:#000"></i>
<span class="ax" style="left:85px;width:60px;text-align:center;top:683px">800</span>
<span class="ax" style="left:129px;width:60px;text-align:center;top:683px">1.0k</span>
<span class="ax" style="left:264px;width:60px;text-align:center;top:683px">2.0k</span>
<span class="ax" style="left:344px;width:60px;text-align:center;top:683px">3.0k</span>
<span class="ax" style="left:400px;width:60px;text-align:center;top:683px">4.0k</span>
<span class="ax" style="left:444px;width:60px;text-align:center;top:683px">5.0k</span>
<span class="ax" style="left:479px;width:60px;text-align:center;top:683px">6.0k</span>
<span class="ax" style="left:536px;width:60px;text-align:center;top:683px">8.0k</span>
<span class="ax" style="left:579px;width:60px;text-align:center;top:683px">10.0k</span>
<span class="ax" style="left:715px;width:60px;text-align:center;top:683px">20.0k</span>
<span class="ax" style="left:794px;width:60px;text-align:center;top:683px">30.0k</span>
<span class="ax" style="left:851px;width:60px;text-align:center;top:683px">40.0k</span>
<span class="ax" style="left:452px;width:120px;text-align:center;top:695px">Frequency (Hz)</span>
<span class="t" style="left:886px;top:168px;font:italic bold 24px 'Liberation Serif',serif;line-height:24px;color:#808080">S</span>
<span class="t" style="left:900px;top:173px;font:italic 17px 'Liberation Serif',serif;line-height:20px;color:#808080">+</span>
<span class="t" style="left:324px;top:350px;font:23px 'Liberation Sans',sans-serif;letter-spacing:0.389px;line-height:26px">IRFP240/9140</span>
<span class="t" style="left:324px;top:376px;white-space:pre;font:23px 'Liberation Sans',sans-serif;letter-spacing:0.653px;line-height:26px">Pвых = 75W  Rн = 8 Ом</span>
<div class="fw" style="left:319px;top:221px;width:219px;height:74px;background:#0a3fd6;box-shadow:inset 1px 1px 0 #0831d9,inset -1px -1px 0 #001ea0"><div class="ti" style="background:linear-gradient(#3585f5 0,#0b62ee 3px,#0558e6 8px,#0553e0 16px,#0a5de8 20px,#0648d0 23px)"></div><span class="tt" style="color:#fff;top:7px">THD</span><i class="x" style="left:200px;top:6px;background:linear-gradient(135deg,#e8846a,#cf4526 50%,#b83212)"><svg class="a" style="left:0;top:0" width="11" height="11"><path d="M2.5,2.5 L8.5,8.5 M8.5,2.5 L2.5,8.5" stroke="#fff" stroke-width="1.8"/></svg></i><div class="val" style="padding-left:1px;font:38px 'Liberation Sans',sans-serif;letter-spacing:0.066px;line-height:54px">0.001547 %</div></div>
<div class="fw" style="left:674px;top:222px;width:204px;height:74px;background:#7a8fdc;box-shadow:inset 1px 1px 0 #8a9ee4,inset -1px -1px 0 #6070c8"><div class="ti" style="background:linear-gradient(#8fa6ea 0,#7b96df 3px,#7a94de 10px,#7e9fe3 16px,#82a6e8 21px,#7a98e0 23px)"></div><span class="tt" style="color:#d8e2f6;top:7px;font:bold 11px 'Liberation Sans',sans-serif;letter-spacing:0.527px;line-height:12px">Peak Amplitude</span><i class="x" style="left:186px;top:6px;width:12px;height:12px;border-color:#d9dff2;background:linear-gradient(135deg,#c08a98,#b06a7e 50%,#a85e74)"><svg class="a" style="left:0;top:0" width="10" height="10"><path d="M2.3,2.3 L7.7,7.7 M7.7,2.3 L2.3,7.7" stroke="#fff" stroke-width="1.8"/></svg></i><div class="val" style="text-align:center">-6.73 dBV</div></div>
<span class="ov" style="left:944px;top:154px;font-size:12px;text-decoration:underline">Overlays</span>
<span class="ov" style="left:924px;top:186px;transform:rotate(-90deg);transform-origin:0 0;font-size:12.5px">Set</span>
<span class="ov" style="left:939px;top:186px;transform:rotate(-90deg);transform-origin:0 0;font-size:12.5px">On</span>
<i class="ob" style="top:189px;font-style:normal">1</i>
<i class="cb" style="top:190px"></i>
<span class="ov" style="left:957px;top:190px;color:#008000;font:12px 'Liberation Sans',sans-serif;letter-spacing:-0.262px;line-height:14px">Overlay 1</span>
<i class="ob" style="top:205px;font-style:normal">2</i>
<i class="cb" style="top:206px"></i>
<span class="ov" style="left:957px;top:206px;color:#00a0a0;font:12px 'Liberation Sans',sans-serif;letter-spacing:-0.262px;line-height:14px">Overlay 2</span>
<i class="ob" style="top:221px;font-style:normal">3</i>
<i class="cb" style="top:222px"></i>
<span class="ov" style="left:957px;top:222px;color:#800080;font:12px 'Liberation Sans',sans-serif;letter-spacing:-0.262px;line-height:14px">Overlay 3</span>
<i class="ob" style="top:237px;font-style:normal">4</i>
<i class="cb" style="top:238px"></i>
<span class="ov" style="left:957px;top:238px;color:#ff00ff;font:12px 'Liberation Sans',sans-serif;letter-spacing:-0.262px;line-height:14px">Overlay 4</span>
<i class="ob" style="top:253px;font-style:normal">5</i>
<i class="cb" style="top:254px"></i>
<span class="ov" style="left:957px;top:254px;color:#805020;font:12px 'Liberation Sans',sans-serif;letter-spacing:-0.262px;line-height:14px">Overlay 5</span>
<i class="ob" style="top:269px;font-style:normal">6</i>
<i class="cb" style="top:270px"></i>
<span class="ov" style="left:957px;top:270px;color:#ff0000;font:12px 'Liberation Sans',sans-serif;letter-spacing:-0.262px;line-height:14px">Overlay 6</span>
<i class="ob" style="top:285px;font-style:normal">C</i>
<i class="cb" style="top:286px"></i>
<span class="ov" style="left:957px;top:286px;color:#000;font:12px 'Liberation Sans',sans-serif;letter-spacing:0.349px;line-height:14px">Composite</span>
<div class="a" style="left:920px;top:302px;width:64px;height:18px;background:#ece9d8;border:1px solid;border-color:#fff #716f64 #716f64 #fff;box-shadow:inset -1px -1px 0 #aca899;font:12px 'Liberation Sans',sans-serif;line-height:15px;padding-left:5px">Options...</div>
<div class="pm" style="left:932px;top:696px;background:#ece9d8"><i style="left:2px;top:4px;width:5px;height:1px"></i><i style="left:4px;top:2px;width:1px;height:5px"></i></div>
<div class="pm" style="left:1008px;top:696px;background:#ece9d8"><i style="left:2px;top:4px;width:4px;height:1px"></i></div>

<i class="a" style="left:2px;top:709px;width:1020px;height:2px;background:#fff"></i>
<div class="sb" style="left:5px;width:119px;letter-spacing:0.34px;padding-left:2px">Stopped</div>
<div class="sb" style="left:125px;width:102px;letter-spacing:0.50px;padding-left:2px">Real Time</div>
<div class="sb" style="left:228px;width:72px;letter-spacing:0.25px">96000 Hz</div>
<div class="sb" style="left:301px;width:52px;letter-spacing:0.27px">24 Bit</div>
<div class="sb" style="left:354px;width:52px;letter-spacing:0.10px">Stereo</div>
<div class="sb" style="left:407px;width:102px;letter-spacing:0.11px">FFT 131072 pts</div>
<div class="sb" style="left:510px;width:74px;letter-spacing:0.46px;padding-left:2px">Hanning</div>
<div class="sb" style="left:585px;width:435px"></div>

<div id="task" class="a"></div>
<div class="a" style="left:0;top:738px;width:97px;height:30px;border-radius:0 11px 13px 0/0 15px 15px 0;background:linear-gradient(#2c7d2e 0,#56b257 2px,#46a648 4px,#3c9c3f 8px,#3b9a3e 16px,#3a983d 22px,#30862f 27px,#276f29 30px);box-shadow:inset -4px 0 5px -2px #1f5f22,inset 2px 0 2px -1px #2a7a2c, 1px 0 2px #1a3f9a"></div>
<div class="a" style="left:20px;top:744px;width:60px;height:18px;border-radius:9px;background:radial-gradient(ellipse at center,rgba(90,190,92,.55),rgba(90,190,92,0) 70%)"></div>
<svg class="a" style="left:10px;top:743px" width="20" height="19" viewBox="0 0 20 19"><path d="M2.500,2.500 Q6,0 9.500,2 L8,8.500 Q4.500,6.500 1,9z" fill="#e9542b"/><path d="M11,2.800 Q14,5 18.500,2.500 L17,9 Q13,11.500 9.500,9.300z" fill="#7cc242"/><path d="M0.600,10.500 Q4,8 7.600,10 L6.200,16.500 Q2.800,14.500 -0.800,17z" fill="#4b88ea"/><path d="M9.200,10.800 Q12.500,13 16.600,10.500 L15.200,17 Q11.500,19.500 7.800,17.300z" fill="#f4c22e"/></svg>
<span class="t" style="left:36px;top:743px;font:italic bold 18px 'Liberation Sans',sans-serif;color:#fff;text-shadow:1px 1px 1px #1d4d1f;letter-spacing:-0.9px">пуск</span>
<div class="tk" style="left:105px;width:160px;background:#1e52b7;box-shadow:inset 1px 1px 1px #153c8e,inset -1px -1px 0 #2c62c8;padding-left:30px"><span style="font:11px 'Liberation Sans',sans-serif;letter-spacing:-0.257px;line-height:22px">SpectraPLUS-SC Sou...</span></div>
<svg class="a" style="left:116px;top:746px" width="16" height="16" viewBox="0 0 16 16" shape-rendering="crispEdges"><rect x="0" y="0" width="16" height="16" fill="#fff"/><rect x="0.5" y="0.5" width="15" height="15" fill="none" stroke="#000"/><rect x="4" y="1" width="1" height="14" fill="#b0b0b0"/><rect x="1" y="4" width="14" height="1" fill="#b0b0b0"/><rect x="8" y="1" width="1" height="14" fill="#b0b0b0"/><rect x="1" y="8" width="14" height="1" fill="#b0b0b0"/><rect x="12" y="1" width="1" height="14" fill="#b0b0b0"/><rect x="1" y="12" width="14" height="1" fill="#b0b0b0"/><path d="M1.5,4.5 L4,3 L6,6 L8,3.5 L10,7 L12,5 L14,10" fill="none" stroke="#e00020" stroke-width="1.4" shape-rendering="auto"/><path d="M2,3 L5,5.5 L7,3 L9.5,6.5 L11.5,3.5 L14.5,9" fill="none" stroke="#1020e0" stroke-width="1.2" shape-rendering="auto"/><rect x="3" y="8" width="10" height="7" fill="#fff" opacity=".6"/><text x="2.500" y="14.600" font-family="Liberation Serif,serif" font-style="italic" font-weight="bold" font-size="9.500" fill="#000" stroke="#000" stroke-width="0.300" shape-rendering="auto" textLength="11" lengthAdjust="spacingAndGlyphs">SC</text></svg>
<div class="tk" style="left:266px;width:158px;background:linear-gradient(#5a9bfa 0,#3c81f3 3px,#3a7eef 18px,#2f6fe0 23px);box-shadow:inset 1px 1px 0 #6aa8ff,inset -1px -1px 0 #2858c0;padding-left:28px"><span style="font:11px 'Liberation Sans',sans-serif;letter-spacing:-0.255px;line-height:22px">IRFP-4 Om.PNG - Paint</span></div>
<svg class="a" style="left:277px;top:745px" width="16" height="17" viewBox="0 0 16 17"><path d="M3,7 L13,7 L11.5,16 L4.5,16z" fill="#d8dce8" stroke="#8890a8" stroke-width="0.6"/><path d="M4,1 L6,9" stroke="#c03020" stroke-width="1.6"/><path d="M8,1 L8,9" stroke="#e0a020" stroke-width="1.6"/><path d="M12,1.5 L10,9" stroke="#30a040" stroke-width="1.6"/><path d="M2,3 L5,9" stroke="#a06030" stroke-width="1.3"/></svg>
<div class="a" style="left:838px;top:745px;width:16px;height:16px;background:#3168d5"></div>
<span class="t" style="left:839px;top:748px;font:11px 'Liberation Sans',sans-serif;color:#fff">RU</span>
<svg class="a" style="left:859px;top:745px" width="18" height="16" viewBox="0 0 18 16" shape-rendering="crispEdges"><path d="M5,2h1v1h-1z M6,1h1v1h-1z M7,2h1v1h-1z M8,1h1v1h-1z M9,2h1v1h-1z M10,1h1v1h-1z M11,2h1v1h-1z M12,1h1v1h-1z M13,2h1v3h-1z" fill="#000"/><rect x="1.500" y="5.500" width="15" height="9" rx="1" fill="#fff" stroke="#000"/><path d="M3,8.500 h12 M3,10.500 h12" stroke="#000" stroke-dasharray="1 1"/><path d="M4,12.500 h10" stroke="#000" stroke-dasharray="1 1"/></svg>
<div class="a" style="left:895px;top:738px;width:129px;height:30px;background:linear-gradient(#0f8de8 0,#19b0f5 2px,#12a0ee 5px,#0f96e8 12px,#0e8fe2 22px,#0c82d6 27px,#0a6cc0 30px);box-shadow:inset 1px 0 0 #0c5fb8,inset 2px 0 0 #35c0ff"></div>
<svg class="a" style="left:906px;top:744px" width="17" height="18" viewBox="0 0 17 18"><rect x="6" y="1.500" width="7" height="6.500" fill="#5a5ea8" stroke="#9aa2d8" stroke-width="1"/><rect x="7.200" y="2.700" width="4.600" height="4" fill="#2c2c78"/><rect x="1" y="4.800" width="7" height="6.500" fill="#6a70b8" stroke="#a8b0e0" stroke-width="1"/><rect x="2.200" y="6" width="4.600" height="4" fill="#34348a"/><ellipse cx="4" cy="13.500" rx="3.500" ry="1.600" fill="#c8d0f0"/><path d="M7.500,8.500 L15.500,16.500 M15.500,8.500 L7.500,16.500" stroke="#e83030" stroke-width="2.400"/></svg>
<svg class="a" style="left:924px;top:745px" width="17" height="17" viewBox="0 0 17 17"><ellipse cx="6" cy="6.500" rx="5.500" ry="5.800" fill="#3c3c40"/><ellipse cx="5.200" cy="6" rx="3.800" ry="4.200" fill="#8a8a92"/><ellipse cx="5" cy="5.800" rx="2" ry="2.400" fill="#4a4a52"/><path d="M1.500,4 Q3,1.500 6,1.200" stroke="#d0d0d8" fill="none" stroke-width="1"/><path d="M9,13.500 Q13,12.500 15,8.500 M10.500,15 Q14,14 16,10.500" stroke="#a8a8f0" fill="none" stroke-width="0.900"/></svg>
<svg class="a" style="left:942px;top:744px" width="16" height="17" viewBox="0 0 16 17"><path d="M1,4.500 L5,1 L5,3 L9.500,2 L9,6.500 L5.500,6 L6,9z" fill="#2eb82e" stroke="#0e6a0e" stroke-width="0.700"/><path d="M3,9.500 L11,6.500 L14,11 L5.500,14.500z" fill="#50505c" stroke="#20202a" stroke-width="0.800"/><path d="M5,10.500 L10.500,8.300 M6,12 L11.500,9.800" stroke="#d8d8e4" stroke-width="0.900"/></svg>
<svg class="a" style="left:960px;top:745px" width="17" height="17" viewBox="0 0 17 17"><circle cx="8" cy="8" r="8" fill="#3fae2a"/><path d="M1,8 A7,7 0 0 1 12,2 L8,8z" fill="#9fe07a" opacity=".75"/><circle cx="9.800" cy="9.700" r="5.600" fill="#5a20b0" stroke="#eee4fb" stroke-width="1.100"/><rect x="2.500" y="8.500" width="2.500" height="2.500" fill="#fff" opacity=".85"/><text x="9.800" y="12.700" font-family="Liberation Sans,sans-serif" font-size="8.500" fill="#fff" text-anchor="middle">8</text></svg>
<span class="t" style="left:984px;top:747px;font:11px 'Liberation Sans',sans-serif;color:#fff">11:50</span>
</body></html>
